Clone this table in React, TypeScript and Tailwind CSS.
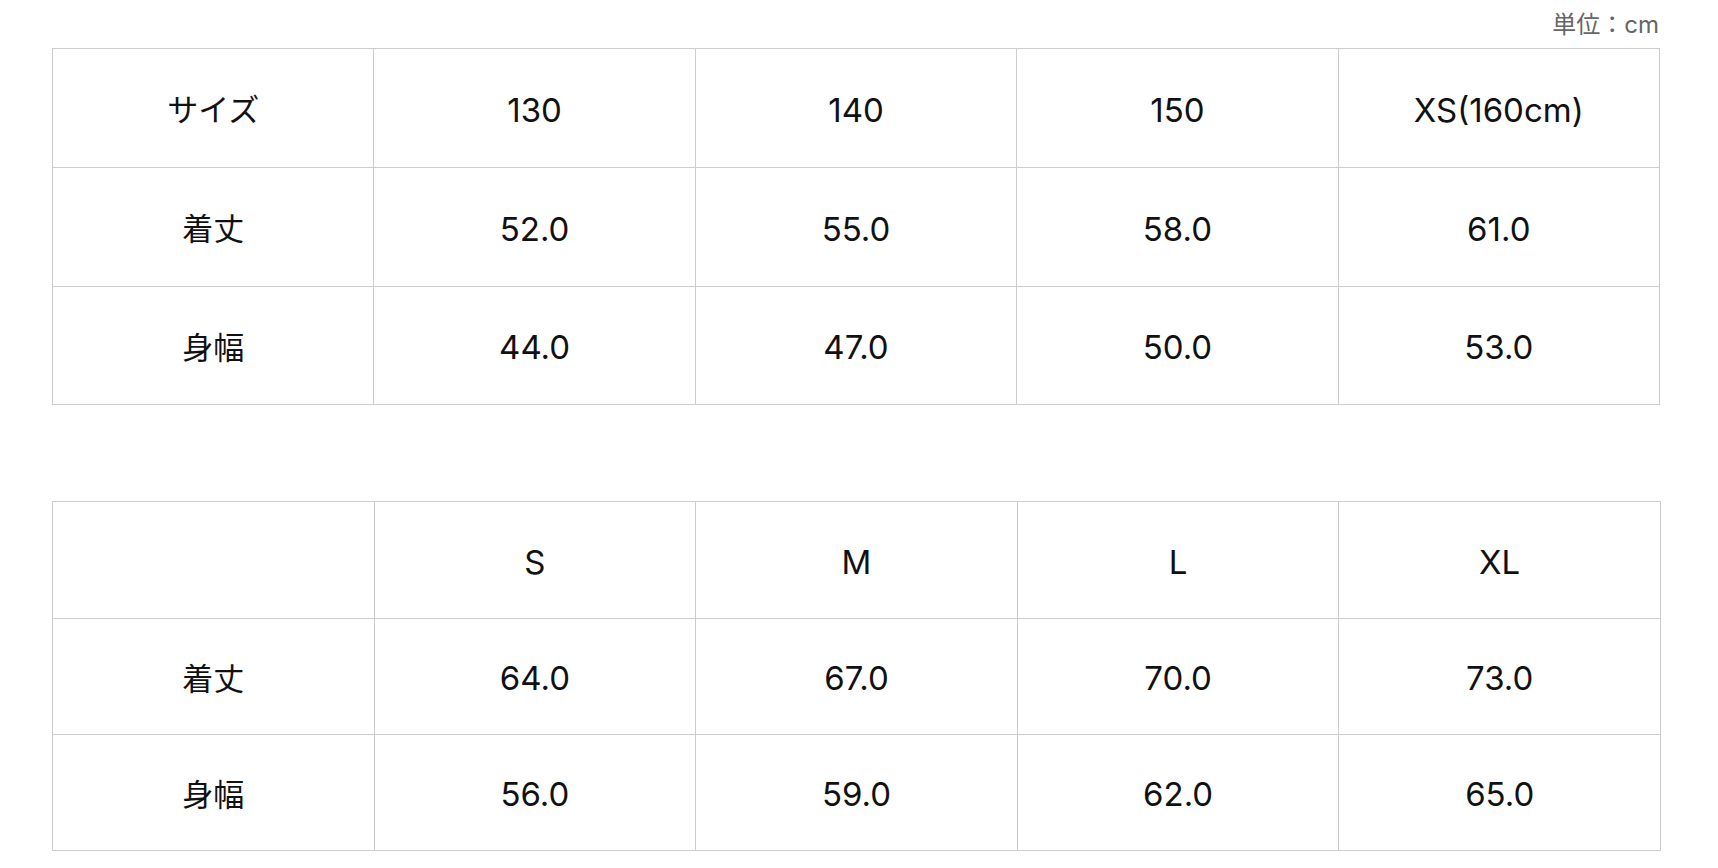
const jr = { fontFamily: 'Inter, "Noto Sans CJK JP", sans-serif' };

type Table = { rows: string[][]; heights: string[]; width: string };

const tables: Table[] = [
  {
    width: "w-[1608px]",
    heights: ["h-[119px]", "h-[119px]", "h-[118px]"],
    rows: [
      ["サイズ", "130", "140", "150", "XS(160cm)"],
      ["着丈", "52.0", "55.0", "58.0", "61.0"],
      ["身幅", "44.0", "47.0", "50.0", "53.0"],
    ],
  },
  {
    width: "w-[1609px]",
    heights: ["h-[117px]", "h-[116px]", "h-[116px]"],
    rows: [
      ["", "S", "M", "L", "XL"],
      ["着丈", "64.0", "67.0", "70.0", "73.0"],
      ["身幅", "56.0", "59.0", "62.0", "65.0"],
    ],
  },
];

function SizeTable({ t }: { t: Table }) {
  return (
    <div className={`${t.width} border-l border-t border-[#cccccc] grid grid-cols-5`}>
      {t.rows.map((row, i) =>
        row.map((cell, j) => (
          <div
            key={`${i}-${j}`}
            className={`${t.heights[i]} ${j === 0 ? "text-[31px]" : "text-[33px]"} border-r border-b border-[#cccccc] flex items-center justify-center pt-[5px] text-[#111111]`}
          >
            {cell}
          </div>
        ))
      )}
    </div>
  );
}

export default function App() {
  return (
    <div className="min-h-screen bg-white pl-[52px]" style={jr}>
      <div className="w-[1607px] h-[48px] flex items-center justify-end text-[24px] text-[#666666] pt-[1px]">
        単位：cm
      </div>
      <SizeTable t={tables[0]} />
      <div className="h-[96px]" />
      <SizeTable t={tables[1]} />
    </div>
  );
}
